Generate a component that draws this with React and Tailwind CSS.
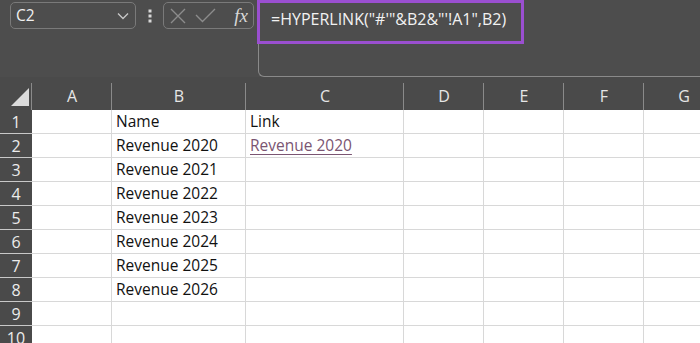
import React from "react";

const cols = [
  { l: "A", w: "w-[80px]" },
  { l: "B", w: "w-[134px]" },
  { l: "C", w: "w-[158px]" },
  { l: "D", w: "w-[80px]" },
  { l: "E", w: "w-[80px]" },
  { l: "F", w: "w-[80px]" },
  { l: "G", w: "w-[80px]" },
];

const rows = [
  ["", "Name", "Link"],
  ["", "Revenue 2020", "LINK"],
  ["", "Revenue 2021", ""],
  ["", "Revenue 2022", ""],
  ["", "Revenue 2023", ""],
  ["", "Revenue 2024", ""],
  ["", "Revenue 2025", ""],
  ["", "Revenue 2026", ""],
  ["", "", ""],
  ["", "", ""],
];

export default function App() {
  return (
    <div className="w-[700px] h-[343px] overflow-hidden bg-[#4d4d4d] flex flex-col" style={{ fontFamily: '"Open Sans", "Noto Sans", sans-serif' }}>
      {/* Top toolbar */}
      <div className="flex h-[77px] shrink-0">
        <div className="w-[258px] shrink-0 flex items-start pl-[10px] pt-[2px]">
          <div className="w-[126px] h-[27px] border border-[#7a7a7a] rounded-[5px] flex items-center justify-between pl-[5px] pr-[6px]">
            <span className="text-[15.5px] text-[#f0f0f0] leading-none">C2</span>
            <svg width="12" height="8" viewBox="0 0 12 8" fill="none" stroke="#c8c8c8" strokeWidth="1.3">
              <path d="M1 1.5 L6 6.5 L11 1.5" />
            </svg>
          </div>
          <div className="w-[27px] h-[27px] flex items-center justify-center">
            <svg width="4" height="14" viewBox="0 0 4 14" fill="#d8d8d8">
              <rect x="0.5" y="0.5" width="3" height="3" />
              <rect x="0.5" y="5.5" width="3" height="3" />
              <rect x="0.5" y="10.5" width="3" height="3" />
            </svg>
          </div>
          <div className="w-[91px] h-[27px] border border-[#7a7a7a] rounded-[5px] flex items-center pl-[6px] pr-[5px] gap-[9px]">
            <svg width="16" height="16" viewBox="0 0 16 16" fill="none" stroke="#8c8c8c" strokeWidth="1.4">
              <path d="M1 1 L15 15 M15 1 L1 15" />
            </svg>
            <svg width="21" height="15" viewBox="0 0 21 15" fill="none" stroke="#8c8c8c" strokeWidth="1.4">
              <path d="M1 7 L7.5 13.5 L20 1" />
            </svg>
            <span className="ml-auto text-[19px] italic text-[#d8d8d8] leading-none" style={{ fontFamily: '"Liberation Serif", "DejaVu Serif", serif' }}>fx</span>
          </div>
        </div>
        <div className="flex-1 border-l border-b border-t border-[#8a8a8a] rounded-bl-[6px] -mt-px">
          <div className="w-[267px] h-[44px] border-[3px] border-[#9a4fd0] -ml-[2px] flex items-start pl-[11px] pt-[8px]">
            <span className="text-[16px] text-[#f2f2f2] leading-none whitespace-nowrap">=HYPERLINK("#'"&amp;B2&amp;"'!A1",B2)</span>
          </div>
        </div>
      </div>

      {/* Column header */}
      <div className="flex h-[33px] shrink-0 bg-[#4a4a4a]">
        <div className="w-[32px] shrink-0 flex items-end justify-end pr-[2px] pb-[4px] border-r border-[#8a8a8a] mt-[6px]">
          <svg width="18" height="18" viewBox="0 0 18 18">
            <path d="M18 0 L18 18 L0 18 Z" fill="#dcdcdc" />
          </svg>
        </div>
        {cols.map((c) => (
          <div key={c.l} className={`${c.w} shrink-0 flex items-center justify-center pt-[4px] relative`}>
            <span className="text-[16px] text-[#e6e6e6]">{c.l}</span>
            <div className="absolute right-0 top-[6px] bottom-0 w-px bg-[#8a8a8a]" />
          </div>
        ))}
      </div>

      {/* Grid rows */}
      {rows.map((r, i) => (
        <div key={i} className="flex h-[24px] shrink-0">
          <div className="w-[32px] shrink-0 bg-[#4a4a4a] border-b border-[#c8c8c8] flex items-center justify-center">
            <span className="text-[16px] text-[#ececec] leading-none">{i + 1}</span>
          </div>
          {cols.map((c, j) => {
            const v = r[j] || "";
            return (
              <div key={c.l} className={`${c.w} shrink-0 bg-white border-r border-b border-[#d8d8d8] flex items-center pl-[4px] overflow-hidden`}>
                {v === "LINK" ? (
                  <span className="text-[15.5px] text-[#7a5572] underline underline-offset-[3px] whitespace-nowrap leading-none">Revenue 2020</span>
                ) : (
                  <span className="text-[15.5px] text-[#111] whitespace-nowrap leading-none">{v}</span>
                )}
              </div>
            );
          })}
        </div>
      ))}
    </div>
  );
}
